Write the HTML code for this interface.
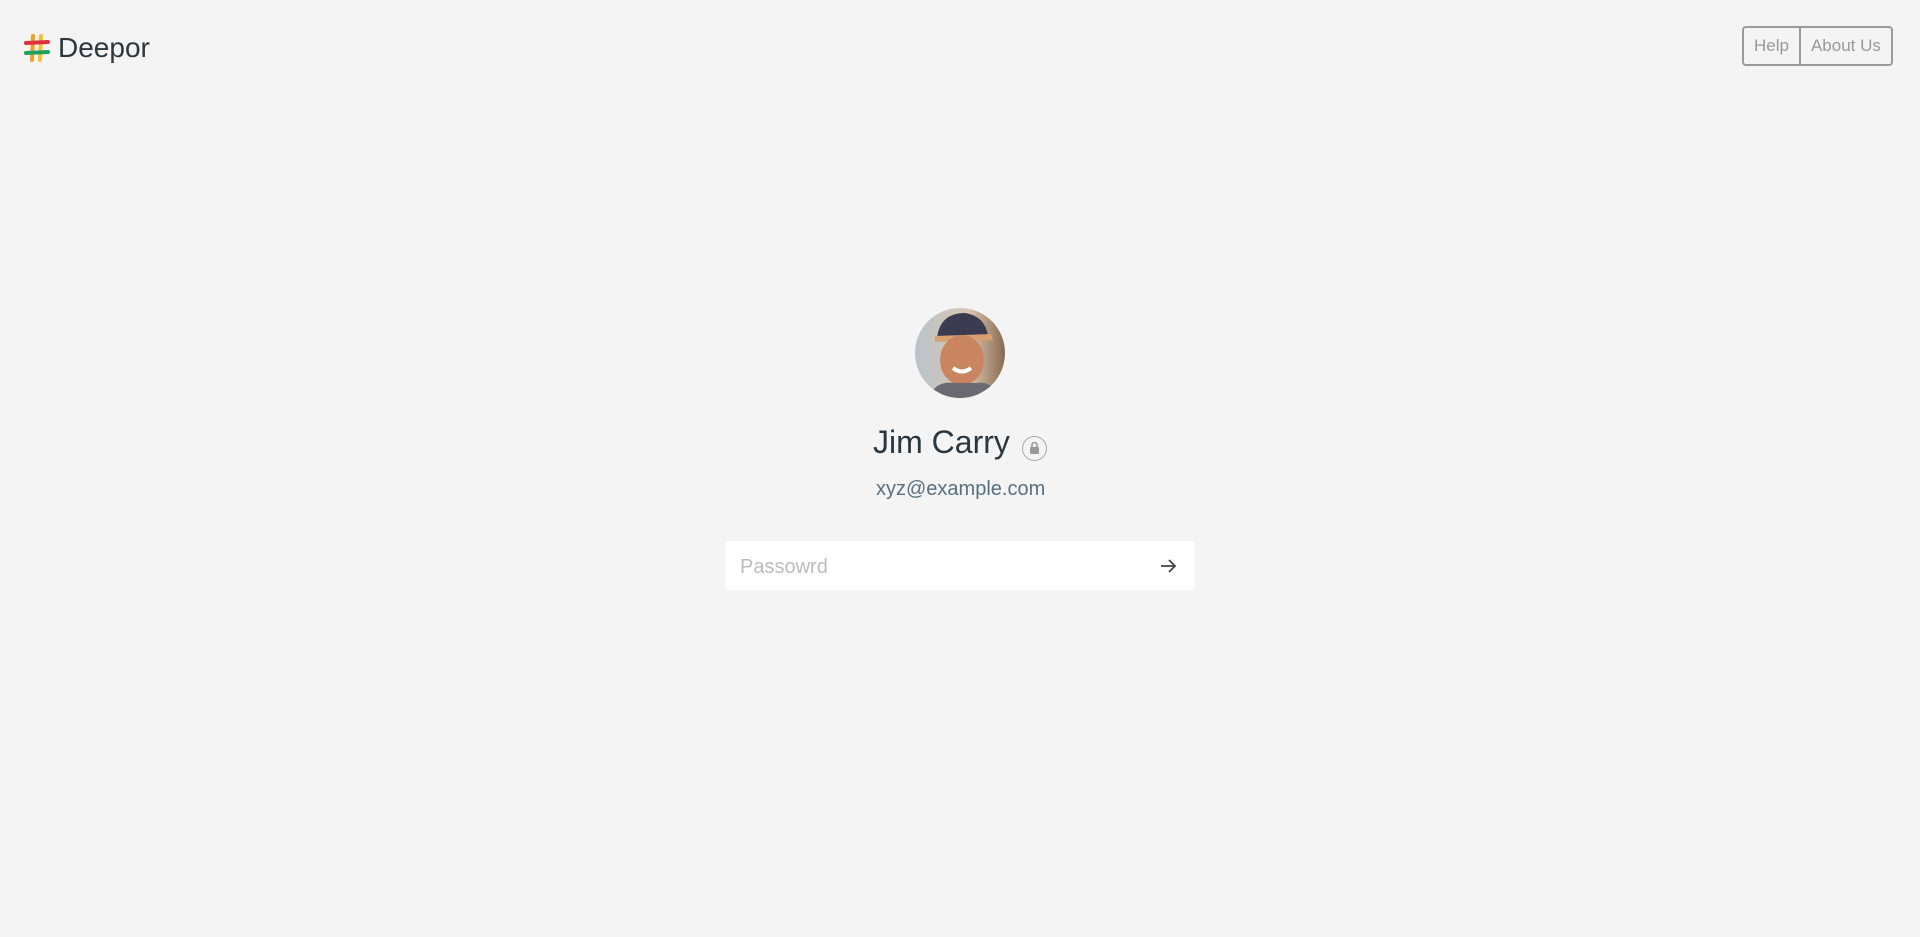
<!DOCTYPE html>
<html><head><meta charset="utf-8"><style>
body{margin:0;width:1920px;height:937px;background:#f4f4f4;font-family:"Liberation Sans",sans-serif;position:relative;overflow:hidden}
.logo{position:absolute;left:24px;top:30px;display:flex;align-items:center}
.logo span{font-size:28px;color:#2a3640;margin-left:8px;line-height:36px}
.btns{position:absolute;left:1742px;top:26px;height:36px;border:2px solid #9a9a9a;border-radius:4px;display:flex}
.btns div{font-size:17px;color:#999;line-height:36px;padding:0 10px}
.btns div+div{border-left:2px solid #9a9a9a}
.av{position:absolute;left:915px;top:308px;width:90px;height:90px;border-radius:50%;overflow:hidden;background:linear-gradient(90deg,#b9c4cc,#d9c5b0 60%,#8a6a50)}
.name{position:absolute;left:873px;top:424px;font-size:32px;color:#2a3640}
.lock{position:absolute;left:1022px;top:436px;width:23px;height:23px;border:1px solid #aaa;border-radius:50%}
.email{position:absolute;left:876px;top:478px;font-size:20px;color:#557080}
.inp{position:absolute;left:725px;top:541px;width:470px;height:49px;background:#fff;border-radius:5px}
.inp span{position:absolute;left:15px;top:15px;font-size:20px;color:#bcbcbc}
</style></head><body>
<div class="logo"><svg width="26" height="28" viewBox="0 0 26 28"><path d="M9 2 L8 26" stroke="#f0a020" stroke-width="4" stroke-linecap="round"/><path d="M17 2 L16 26" stroke="#f5c030" stroke-width="4" stroke-linecap="round"/><path d="M2 9 L24 8" stroke="#e03040" stroke-width="4" stroke-linecap="round"/><path d="M2 19 L24 18" stroke="#20a060" stroke-width="4" stroke-linecap="round"/></svg><span>Deepor</span></div>
<div class="btns"><div>Help</div><div>About Us</div></div>
<div class="av"><svg width="90" height="90" viewBox="0 0 90 90"><path d="M22 30 Q25 5 50 5 Q70 8 73 28 Z" fill="#3a3a50"/><path d="M20 28 L76 26 L78 32 L20 34Z" fill="#d8a070"/><ellipse cx="47" cy="52" rx="22" ry="25" fill="#c88560"/><path d="M14 90 Q20 72 40 75 L60 75 Q78 72 84 90Z" fill="#6a6a70"/><path d="M38 60 Q47 67 56 60" stroke="#fff" stroke-width="4" fill="none"/></svg></div>
<div class="name">Jim Carry</div>
<div class="lock"><svg width="23" height="23" viewBox="0 0 23 23"><rect x="7" y="10" width="9" height="7" rx="1" fill="#999"/><path d="M9 10V8a2.5 2.5 0 0 1 5 0v2" stroke="#999" stroke-width="1.6" fill="none"/></svg></div>
<div class="email">xyz@example.com</div>
<div class="inp"><span>Passowrd</span><svg style="position:absolute;left:434px;top:16px" width="18" height="18" viewBox="0 0 18 18"><path d="M2 9H16M10 3L16 9L10 15" stroke="#444" stroke-width="1.8" fill="none"/></svg></div>
</body></html>
